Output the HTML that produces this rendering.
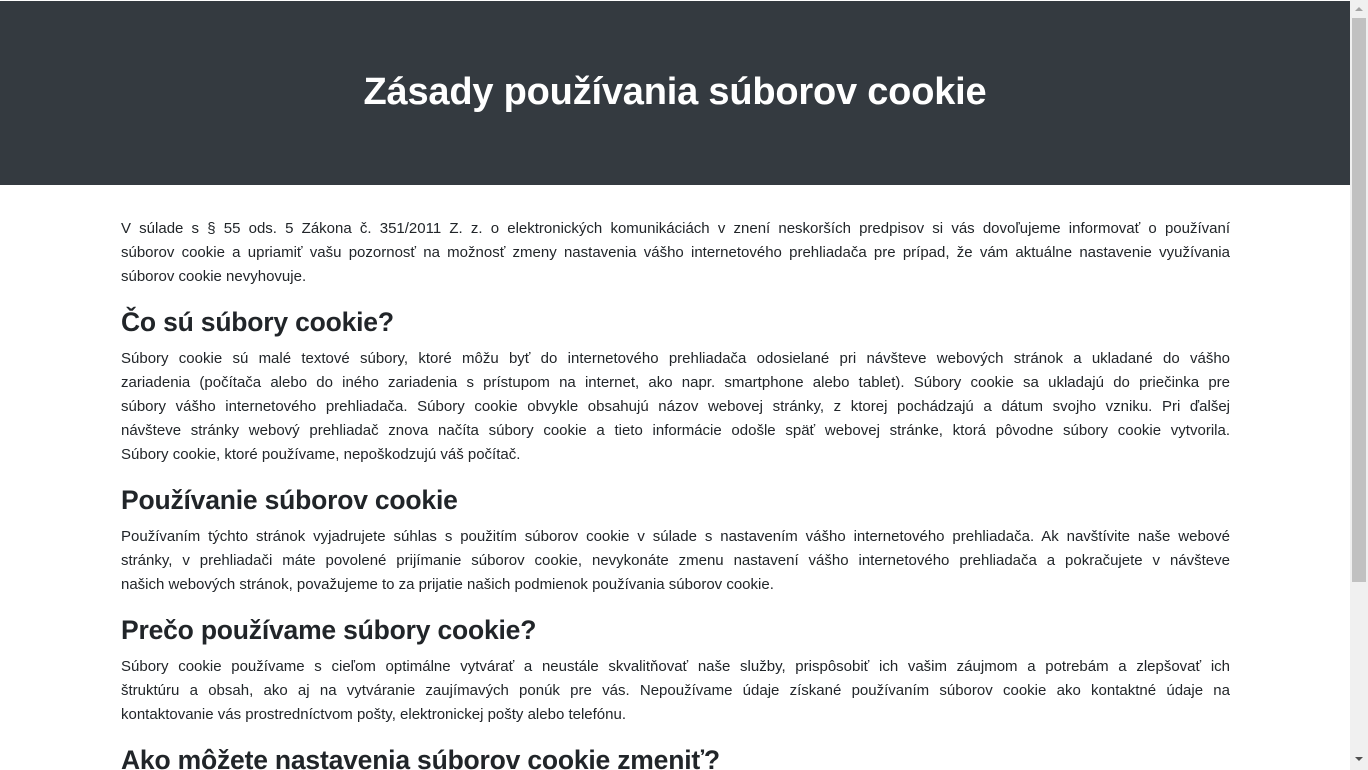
<!DOCTYPE html>
<html><head><meta charset="utf-8"><style>
*{box-sizing:border-box}
html,body{margin:0;padding:0;width:1368px;height:770px;overflow:hidden;background:#fff}
body{font-family:"Liberation Sans",sans-serif;color:#212529;position:relative}
.page{position:absolute;left:0;top:0;width:1350px;height:770px;overflow:hidden}
header{margin-top:1px;height:184px;background:#343a40;color:#fff;text-align:center}
header h1{margin:0;padding-top:69px;font-size:38px;font-weight:bold;line-height:44px;letter-spacing:-0.2px}
.c{width:1110px;margin:0 auto;padding-top:32px;padding-left:1px}
p{margin:0 0 16px;font-size:15px;line-height:24px}
p span{display:block;text-align:justify;text-align-last:justify;white-space:nowrap}
p span.l{text-align-last:left}
h2{margin:0 0 7px;font-size:26.5px;font-weight:bold;line-height:35px;letter-spacing:-0.2px}
.sb{position:absolute;left:1350px;top:0;width:18px;height:770px;background:#f0f0f0}
.th{position:absolute;left:2px;top:18px;width:14px;height:564px;background:#c1c1c1}
.up{position:absolute;left:5px;top:7px;width:0;height:0;border-left:4px solid transparent;border-right:4px solid transparent;border-bottom:4px solid #a3a3a3}
.dn{position:absolute;left:5px;top:757px;width:0;height:0;border-left:4px solid transparent;border-right:4px solid transparent;border-top:4px solid #505050}
</style></head><body>
<div class="page">
<header><h1>Zásady používania súborov cookie</h1></header>
<div class="c">
<p><span>V súlade s § 55 ods. 5 Zákona č. 351/2011 Z. z. o elektronických komunikáciách v znení neskorších predpisov si vás dovoľujeme informovať o používaní</span><span>súborov cookie a upriamiť vašu pozornosť na možnosť zmeny nastavenia vášho internetového prehliadača pre prípad, že vám aktuálne nastavenie využívania</span><span class="l">súborov cookie nevyhovuje.</span></p>
<h2>Čo sú súbory cookie?</h2>
<p><span>Súbory cookie sú malé textové súbory, ktoré môžu byť do internetového prehliadača odosielané pri návšteve webových stránok a ukladané do vášho</span><span>zariadenia (počítača alebo do iného zariadenia s prístupom na internet, ako napr. smartphone alebo tablet). Súbory cookie sa ukladajú do priečinka pre</span><span>súbory vášho internetového prehliadača. Súbory cookie obvykle obsahujú názov webovej stránky, z ktorej pochádzajú a dátum svojho vzniku. Pri ďalšej</span><span>návšteve stránky webový prehliadač znova načíta súbory cookie a tieto informácie odošle späť webovej stránke, ktorá pôvodne súbory cookie vytvorila.</span><span class="l">Súbory cookie, ktoré používame, nepoškodzujú váš počítač.</span></p>
<h2>Používanie súborov cookie</h2>
<p><span>Používaním týchto stránok vyjadrujete súhlas s použitím súborov cookie v súlade s nastavením vášho internetového prehliadača. Ak navštívite naše webové</span><span>stránky, v prehliadači máte povolené prijímanie súborov cookie, nevykonáte zmenu nastavení vášho internetového prehliadača a pokračujete v návšteve</span><span class="l">našich webových stránok, považujeme to za prijatie našich podmienok používania súborov cookie.</span></p>
<h2>Prečo používame súbory cookie?</h2>
<p><span>Súbory cookie používame s cieľom optimálne vytvárať a neustále skvalitňovať naše služby, prispôsobiť ich vašim záujmom a potrebám a zlepšovať ich</span><span>štruktúru a obsah, ako aj na vytváranie zaujímavých ponúk pre vás. Nepoužívame údaje získané používaním súborov cookie ako kontaktné údaje na</span><span class="l">kontaktovanie vás prostredníctvom pošty, elektronickej pošty alebo telefónu.</span></p>
<h2>Ako môžete nastavenia súborov cookie zmeniť?</h2>
<p><span class="l">Väčšina internetových prehliadačov je nastavená tak, aby súbory cookie automaticky akceptovala.</span></p>
</div>
</div>
<div class="sb"><div class="up"></div><div class="th"></div><div class="dn"></div></div>
</body></html>
